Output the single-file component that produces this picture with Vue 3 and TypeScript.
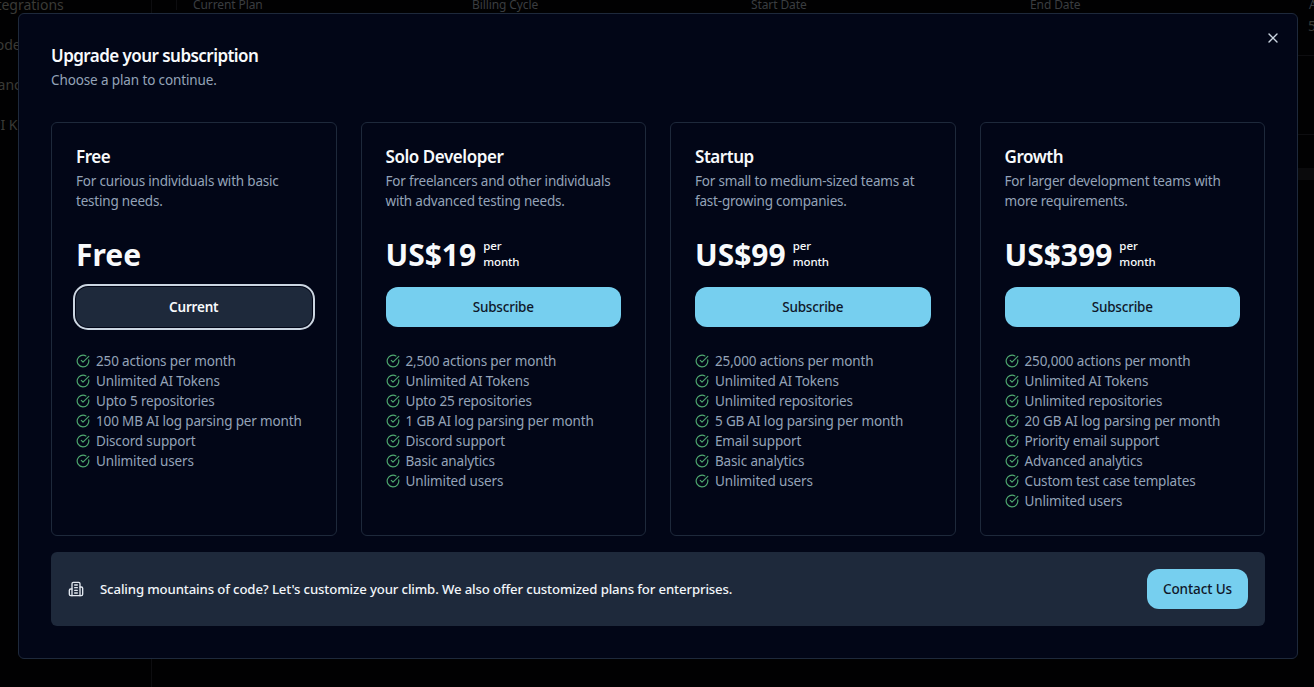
<script setup lang="ts">
interface Plan {
  name: string;
  desc: string;
  price: string;
  perMonth: boolean;
  current: boolean;
  features: string[];
}

const plans: Plan[] = [
  {
    name: 'Free',
    desc: 'For curious individuals with basic testing needs.',
    price: 'Free',
    perMonth: false,
    current: true,
    features: [
      '250 actions per month',
      'Unlimited AI Tokens',
      'Upto 5 repositories',
      '100 MB AI log parsing per month',
      'Discord support',
      'Unlimited users',
    ],
  },
  {
    name: 'Solo Developer',
    desc: 'For freelancers and other individuals with advanced testing needs.',
    price: 'US$19',
    perMonth: true,
    current: false,
    features: [
      '2,500 actions per month',
      'Unlimited AI Tokens',
      'Upto 25 repositories',
      '1 GB AI log parsing per month',
      'Discord support',
      'Basic analytics',
      'Unlimited users',
    ],
  },
  {
    name: 'Startup',
    desc: 'For small to medium-sized teams at fast-growing companies.',
    price: 'US$99',
    perMonth: true,
    current: false,
    features: [
      '25,000 actions per month',
      'Unlimited AI Tokens',
      'Unlimited repositories',
      '5 GB AI log parsing per month',
      'Email support',
      'Basic analytics',
      'Unlimited users',
    ],
  },
  {
    name: 'Growth',
    desc: 'For larger development teams with more requirements.',
    price: 'US$399',
    perMonth: true,
    current: false,
    features: [
      '250,000 actions per month',
      'Unlimited AI Tokens',
      'Unlimited repositories',
      '20 GB AI log parsing per month',
      'Priority email support',
      'Advanced analytics',
      'Custom test case templates',
      'Unlimited users',
    ],
  },
];

const sideItems = ['Integrations', 'Models', 'Branches', 'API Keys'];
const columns = ['Current Plan', 'Billing Cycle', 'Start Date', 'End Date', 'Actions'];
</script>

<template>
  <div class="page">
    <aside class="sidebar">
      <div v-for="item in sideItems" :key="item" class="side-item">{{ item }}</div>
    </aside>
    <main class="behind">
      <div class="behind-head">
        <span v-for="col in columns" :key="col" class="behind-col">{{ col }}</span>
      </div>
      <div class="behind-row">5</div>
      <div class="behind-row tall"></div>
      <div class="behind-strip"></div>
    </main>

    <div class="modal">
      <button class="close-btn" aria-label="Close">
        <svg viewBox="0 0 24 24" width="16" height="16" stroke="currentColor" stroke-width="2" fill="none" stroke-linecap="round">
          <line x1="18" y1="6" x2="6" y2="18"></line>
          <line x1="6" y1="6" x2="18" y2="18"></line>
        </svg>
      </button>

      <h2 class="modal-title">Upgrade your subscription</h2>
      <p class="modal-sub">Choose a plan to continue.</p>

      <div class="plans">
        <section v-for="plan in plans" :key="plan.name" class="plan">
          <h3 class="plan-name">{{ plan.name }}</h3>
          <p class="plan-desc">{{ plan.desc }}</p>
          <div class="price-row">
            <span class="price">{{ plan.price }}</span>
            <span v-if="plan.perMonth" class="per">per<br />month</span>
          </div>
          <button class="plan-btn" :class="{ current: plan.current }">
            {{ plan.current ? 'Current' : 'Subscribe' }}
          </button>
          <ul class="features">
            <li v-for="feature in plan.features" :key="feature">
              <svg class="check" viewBox="0 0 24 24" width="14" height="14" fill="none" stroke="currentColor" stroke-width="2" stroke-linecap="round" stroke-linejoin="round">
                <path d="M21.8 10A10 10 0 1 1 17 3.34"></path>
                <path d="m9 11 3 3L22 4"></path>
              </svg>
              <span>{{ feature }}</span>
            </li>
          </ul>
        </section>
      </div>

      <div class="banner">
        <svg class="banner-icon" viewBox="0 0 24 24" width="16" height="16" fill="none" stroke="currentColor" stroke-width="2" stroke-linecap="round" stroke-linejoin="round">
          <path d="M6 22V4a2 2 0 0 1 2-2h8a2 2 0 0 1 2 2v18Z"></path>
          <path d="M6 12H4a2 2 0 0 0-2 2v6a2 2 0 0 0 2 2h2"></path>
          <path d="M18 9h2a2 2 0 0 1 2 2v9a2 2 0 0 1-2 2h-2"></path>
          <path d="M10 6h4"></path>
          <path d="M10 10h4"></path>
          <path d="M10 14h4"></path>
          <path d="M10 18h4"></path>
        </svg>
        <span class="banner-text">Scaling mountains of code? Let's customize your climb. We also offer customized plans for enterprises.</span>
        <button class="contact-btn">Contact Us</button>
      </div>
    </div>
  </div>
</template>

<style>
html,
body {
  margin: 0;
  background: #000;
}
</style>

<style scoped>
* {
  box-sizing: border-box;
}

.page {
  position: relative;
  display: flex;
  height: 687px;
  overflow: hidden;
  background: #010102;
  font-family: "Noto Sans", "Open Sans", sans-serif;
}

.sidebar {
  width: 152px;
  flex-shrink: 0;
  margin-top: -5px;
  border-right: 1px solid #0d0d10;
}

.side-item {
  height: 40px;
  margin-left: -17px;
  font-size: 14px;
  line-height: 20px;
  color: #3a3a36;
  white-space: nowrap;
}

.behind {
  flex: 1;
  min-width: 0;
  overflow: hidden;
}

.behind-head {
  display: flex;
  height: 13px;
  margin-top: -3px;
  margin-left: 24px;
  padding-left: 16px;
  border-left: 1px solid #0d0d10;
  font-size: 12px;
  line-height: 16px;
  letter-spacing: -0.1px;
  color: #3a3d40;
  white-space: nowrap;
}

.behind-col {
  width: 279px;
  flex-shrink: 0;
}

.behind-row {
  height: 46px;
  padding-top: 6px;
  padding-left: 1156px;
  border-bottom: 1px solid #0d0d10;
  font-size: 14px;
  line-height: 20px;
  color: #3a3a36;
}

.behind-row.tall {
  height: 79px;
}

.behind-strip {
  height: 12px;
  margin-top: 33px;
  background: #0a0a0c;
}

.modal {
  position: absolute;
  top: 13px;
  left: 18px;
  width: 1280px;
  height: 646px;
  padding: 32px;
  background: #020617;
  border: 1px solid #1e293b;
  border-radius: 6px;
}

.close-btn {
  position: absolute;
  top: 16px;
  right: 16px;
  display: flex;
  padding: 0;
  background: none;
  border: none;
  color: #cbd5e1;
}

.modal-title {
  margin: 0;
  font-size: 17px;
  line-height: 20px;
  font-weight: 600;
  letter-spacing: -0.55px;
  color: #f8fafc;
}

.modal-sub {
  margin: 4px 0 0;
  font-size: 13.5px;
  line-height: 20px;
  letter-spacing: -0.12px;
  color: #94a3b8;
}

.plans {
  display: grid;
  grid-template-columns: repeat(4, 1fr);
  gap: 24px;
  margin-top: 32px;
}

.plan {
  height: 414px;
  padding: 24px;
  border: 1px solid #1e293b;
  border-radius: 6px;
}

.plan-name {
  margin: 0;
  font-size: 17px;
  line-height: 20px;
  font-weight: 600;
  letter-spacing: -0.45px;
  color: #f8fafc;
}

.plan-desc {
  margin: 4px 0 0;
  height: 40px;
  font-size: 13.5px;
  line-height: 20px;
  letter-spacing: -0.2px;
  color: #94a3b8;
}

.price-row {
  display: flex;
  align-items: center;
  gap: 7px;
  height: 40px;
  margin-top: 24px;
}

.price {
  font-size: 30px;
  line-height: 36px;
  font-weight: 700;
  color: #f8fafc;
}

.per {
  margin-top: -2px;
  font-size: 11.5px;
  line-height: 16px;
  font-weight: 500;
  letter-spacing: -0.1px;
  color: #f8fafc;
}

.plan-btn {
  display: block;
  width: 100%;
  height: 40px;
  margin-top: 12px;
  background: #76cfef;
  border: none;
  border-radius: 12px;
  font-family: inherit;
  font-size: 13.5px;
  font-weight: 500;
  letter-spacing: -0.2px;
  color: #0f172a;
}

.plan-btn.current {
  background: #1e293b;
  color: #f8fafc;
  font-weight: 600;
  outline: 2px solid #cbd5e1;
  outline-offset: 1px;
}

.features {
  list-style: none;
  margin: 24px 0 0;
  padding: 0;
}

.features li {
  display: flex;
  align-items: center;
  gap: 6px;
  height: 20px;
  font-size: 13.5px;
  letter-spacing: -0.15px;
  color: #94a3b8;
}

.check {
  flex-shrink: 0;
  color: #4ea76f;
}

.banner {
  display: flex;
  align-items: center;
  height: 74px;
  margin-top: 16px;
  padding: 0 17px;
  background: #1e293b;
  border-radius: 6px;
}

.banner-icon {
  flex-shrink: 0;
  color: #e2e8f0;
}

.banner-text {
  flex: 1;
  margin-left: 16px;
  font-size: 13.2px;
  font-weight: 500;
  letter-spacing: -0.13px;
  color: #f1f5f9;
}

.contact-btn {
  width: 101px;
  height: 40px;
  background: #76cfef;
  border: none;
  border-radius: 12px;
  font-family: inherit;
  font-size: 13.5px;
  font-weight: 500;
  letter-spacing: -0.1px;
  color: #0f172a;
}
</style>
